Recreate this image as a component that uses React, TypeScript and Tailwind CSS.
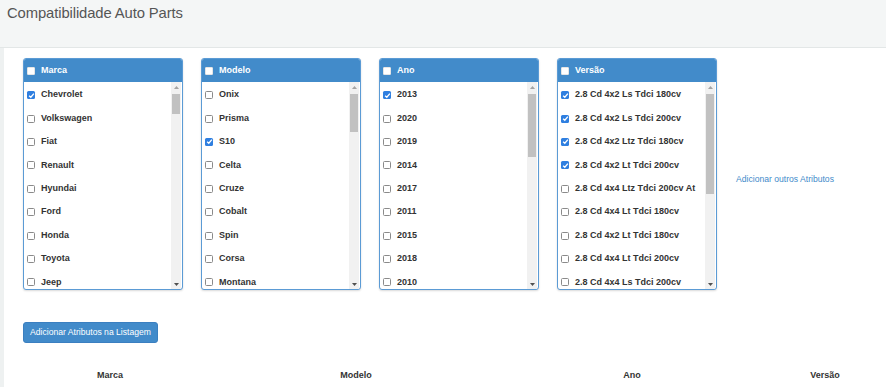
import React from "react";

type Item = { label: string; checked?: boolean };

const panels: { title: string; thumb: [number, number]; items: Item[] }[] = [
  {
    title: "Marca",
    thumb: [95, 115],
    items: [
      { label: "Chevrolet", checked: true },
      { label: "Volkswagen" },
      { label: "Fiat" },
      { label: "Renault" },
      { label: "Hyundai" },
      { label: "Ford" },
      { label: "Honda" },
      { label: "Toyota" },
      { label: "Jeep" },
    ],
  },
  {
    title: "Modelo",
    thumb: [95, 133],
    items: [
      { label: "Onix" },
      { label: "Prisma" },
      { label: "S10", checked: true },
      { label: "Celta" },
      { label: "Cruze" },
      { label: "Cobalt" },
      { label: "Spin" },
      { label: "Corsa" },
      { label: "Montana" },
    ],
  },
  {
    title: "Ano",
    thumb: [95, 158],
    items: [
      { label: "2013", checked: true },
      { label: "2020" },
      { label: "2019" },
      { label: "2014" },
      { label: "2017" },
      { label: "2011" },
      { label: "2015" },
      { label: "2018" },
      { label: "2010" },
    ],
  },
  {
    title: "Versão",
    thumb: [95, 195],
    items: [
      { label: "2.8 Cd 4x2 Ls Tdci 180cv", checked: true },
      { label: "2.8 Cd 4x2 Ls Tdci 200cv", checked: true },
      { label: "2.8 Cd 4x2 Ltz Tdci 180cv", checked: true },
      { label: "2.8 Cd 4x2 Lt Tdci 200cv", checked: true },
      { label: "2.8 Cd 4x4 Ltz Tdci 200cv At" },
      { label: "2.8 Cd 4x4 Lt Tdci 180cv" },
      { label: "2.8 Cd 4x2 Lt Tdci 180cv" },
      { label: "2.8 Cd 4x4 Lt Tdci 200cv" },
      { label: "2.8 Cd 4x4 Ls Tdci 200cv" },
    ],
  },
];

function Box({ checked, white }: { checked?: boolean; white?: boolean }) {
  if (checked) {
    return (
      <span className="flex h-[8px] w-[8px] shrink-0 items-center justify-center rounded-[1.5px] bg-[#2f7fe0]">
        <svg width="7" height="7" viewBox="0 0 8 8">
          <path d="M1.3 4.2 L3.2 6 L6.7 1.8" fill="none" stroke="#fff" strokeWidth="1.5" />
        </svg>
      </span>
    );
  }
  return (
    <span
      className={
        white
          ? "h-[8px] w-[8px] shrink-0 rounded-[1px] border border-[#e5e5e5] bg-white"
          : "h-[8px] w-[8px] shrink-0 rounded-[1.5px] border border-[#8a8a8a] bg-white"
      }
    />
  );
}

function Panel({ title, thumb, items }: (typeof panels)[number]) {
  const trackTop = 83;
  return (
    <div className="flex h-[232px] w-[160px] shrink-0 flex-col overflow-hidden rounded-[3px] border border-[#5b9bd5] bg-white shadow-[0_1px_2px_rgba(0,0,0,0.15)]">
      <div className="flex h-[23px] shrink-0 items-center gap-[6px] bg-[#428bca] pl-[3px] text-[9px] font-bold text-white">
        <Box white />
        <span>{title}</span>
      </div>
      <div className="relative flex min-h-0 flex-1">
        <div className="flex min-w-0 flex-1 flex-col pt-[1.5px]">
          {items.map((it, i) => (
            <div key={i} className="flex h-[23.4px] shrink-0 items-center gap-[6px] pl-[3px] text-[9px] font-bold text-[#333] whitespace-nowrap">
              <Box checked={it.checked} />
              <span>{it.label}</span>
            </div>
          ))}
        </div>
        <div className="relative mr-[1px] w-[10px] shrink-0 bg-[#f1f1f1]">
          <div className="flex h-[10px] items-center justify-center">
            <svg width="5" height="3" viewBox="0 0 5 3">
              <path d="M0 3 L2.5 0 L5 3 Z" fill="#a3a3a3" />
            </svg>
          </div>
          <div
            className="absolute left-[1px] right-[1px] bg-[#c1c1c1]"
            style={{ top: thumb[0] - trackTop, height: thumb[1] - thumb[0] }}
          />
          <div className="absolute bottom-0 left-0 right-0 flex h-[10px] items-center justify-center">
            <svg width="5" height="3" viewBox="0 0 5 3">
              <path d="M0 0 L5 0 L2.5 3 Z" fill="#505050" />
            </svg>
          </div>
        </div>
      </div>
    </div>
  );
}

export default function App() {
  return (
    <div
      className="h-[387px] w-[886px] overflow-hidden bg-[#eef1f1]"
      style={{ fontFamily: '"Liberation Sans", Arial, sans-serif' }}
    >
      <div className="flex h-[48px] items-start border-b border-[#e3e7e7] bg-[#f4f6f6] pl-[7px] pt-[3px]">
        <h1 className="text-[14.8px] font-normal leading-[20px] tracking-[-0.1px] text-[#555]">
          Compatibilidade Auto Parts
        </h1>
      </div>
      <div className="ml-[4px] h-[339px] bg-white pl-[19px] pt-[10px]">
        <div className="flex gap-[18px]">
          {panels.map((p) => (
            <Panel key={p.title} {...p} />
          ))}
          <div className="flex items-center pt-[10px]">
            <span className="ml-px text-[8.6px] text-[#428bca]">Adicionar outros Atributos</span>
          </div>
        </div>
        <div className="mt-[28px]">
          <button className="h-[21px] w-[135px] rounded-[3px] border border-[#3b7fc0] bg-[#428bca] text-[8.6px] text-white">
            Adicionar Atributos na Listagem
          </button>
        </div>
        <div className="mt-[26px] grid grid-cols-[174px_318px_234px_152px] text-[9px] font-bold text-[#333]">
          <div className="text-center">Marca</div>
          <div className="text-center">Modelo</div>
          <div className="text-center">Ano</div>
          <div className="text-center">Versão</div>
        </div>
      </div>
    </div>
  );
}
